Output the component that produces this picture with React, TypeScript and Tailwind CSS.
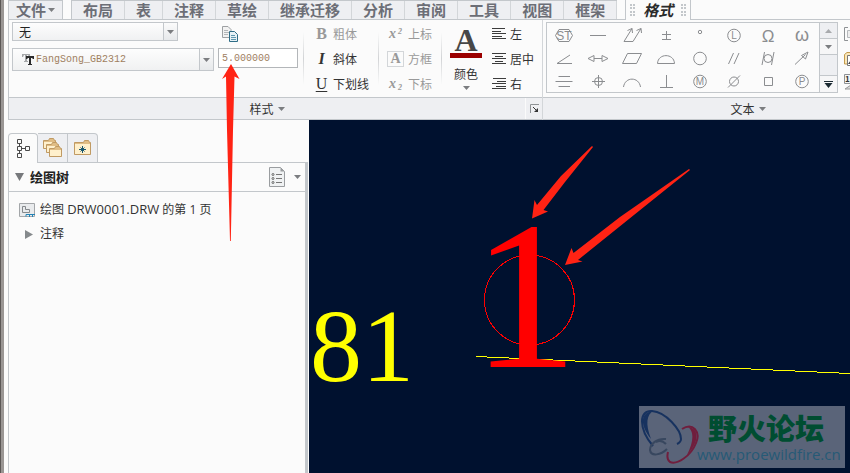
import { useState, type ReactNode } from 'react'

const tabs = ['布局', '表', '注释', '草绘', '继承迁移', '分析', '审阅', '工具', '视图', '框架']

interface SymbolDef {
  name: string
  art: ReactNode
}

const letter = (ch: string, size = 11, y = 14) => (
  <text x="12" y={y} fontSize={size} textAnchor="middle" fill="currentColor" stroke="none">{ch}</text>
)

// every symbol is drawn in a 24x20 box centred on 12,10
const symbols: SymbolDef[] = [
  { name: 'Statistical', art: <><path d="M7 4.500H17L20.500 10.500L17 16.500H7L3.500 10.500Z" />{letter('ST', 12, 15)}</> },
  { name: 'Straightness', art: <path d="M4 10.500H20" /> },
  { name: 'Total runout', art: <path d="M4 16.500L12 3.500M13 16.500L21 3.500M4 16.500H13M7.500 5.500L12 3.500L12.500 8M16.500 5.500L21 3.500L21.500 8" /> },
  { name: 'Plus minus', art: <path d="M12.500 6V14M8 9.500H17M8 14.500H17" /> },
  { name: 'Degree', art: <circle cx="12" cy="7" r="1.700" /> },
  { name: 'Least material', art: <><circle cx="12" cy="10.500" r="6.300" />{letter('L', 10)}</> },
  { name: 'Ohm', art: letter('Ω', 17, 17) },
  { name: 'Omega', art: letter('ω', 18, 16) },
  { name: 'Angularity', art: <path d="M18 7L5 15.500H20" /> },
  { name: 'Symmetric arrow', art: <path d="M8 10.500H16M2 10.500L8 7.500V13.500ZM22 10.500L16 7.500V13.500Z" /> },
  { name: 'Flatness', art: <path d="M7.500 5.500H21.500L16.500 15.500H2.500Z" /> },
  { name: 'Surface profile', art: <path d="M3.500 15.500C4 5 20 5 20.500 15.500Z" /> },
  { name: 'Circularity', art: <circle cx="12" cy="10.500" r="6.300" /> },
  { name: 'Parallelism', art: <path d="M6.500 16L11.500 5M12 16L17 5" /> },
  { name: 'Cylindricity', art: <><circle cx="12" cy="10.500" r="4" /><path d="M6 17L8.500 4M15.500 17L18 4" /></> },
  { name: 'Circular runout', art: <path d="M5 16.500L15.500 6.500M18 4L11.500 7.500L15.500 11Z" /> },
  { name: 'Symmetry', art: <path d="M6.500 5.500H18M3.500 10.500H20.500M6.500 15.500H18" /> },
  { name: 'Position', art: <><circle cx="12.500" cy="10.500" r="4" /><path d="M12.500 4V17M6 10.500H19" /></> },
  { name: 'Line profile', art: <path d="M3.500 16C5 5.500 19 5.500 20.500 16" /> },
  { name: 'Perpendicularity', art: <path d="M12.500 4V16.500M6 16.500H19" /> },
  { name: 'Maximum material', art: <><circle cx="12" cy="10.500" r="6.300" />{letter('M', 10)}</> },
  { name: 'Diameter', art: <><circle cx="12" cy="10.500" r="4.500" /><path d="M6 16.500L18 4.500" /></> },
  { name: 'Square', art: <path d="M8.500 6.500H16.500V14.500H8.500Z" /> },
  { name: 'Projected tolerance', art: <><circle cx="12" cy="10.500" r="6.300" />{letter('P', 10)}</> },
]

function Caret({ className = '' }: { className?: string }) {
  return (
    <svg viewBox="0 0 7 4" className={`h-1 w-[7px] shrink-0 fill-[#7b7d80] ${className}`} aria-hidden="true">
      <path d="M0 0H7L3.500 4Z" />
    </svg>
  )
}

function TextTypeIcon() {
  return (
    <svg viewBox="0 0 13 13" className="h-[13px] w-[13px]" aria-hidden="true">
      <path d="M0 1H8V4H7L6 2H5V8H6V9H2V8H3V2H2L1 4H0Z" fill="#a5a7a9" />
      <path d="M4 3H12V6H11L10 5H9V11H10V12H6V11H7V5H6L5 6H4Z" fill="#2b2b2b" />
    </svg>
  )
}

function CopyIcon() {
  return (
    <svg viewBox="0 0 17 17" className="h-[17px] w-[17px]" fill="none" aria-hidden="true">
      <path d="M0.500 0.500H6L9 3.500V11.500H0.500Z" fill="#f2f2f2" stroke="#9da0a3" />
      <path d="M2 4.500H6M2 6.500H7M2 8.500H6" stroke="#b3b6b8" />
      <path d="M7.500 5.500H12.500L15.500 8.500V15.500H7.500Z" fill="#e7f1f6" stroke="#2f6d87" />
      <path d="M9 9.500H13M9 11.500H14M9 13.500H14" stroke="#5f97ae" />
    </svg>
  )
}

const alignRowY = [0.5, 3.5, 5.5, 8.5, 10.5]

function AlignIcon({ rows }: { rows: [number, number][] }) {
  return (
    <svg viewBox="0 0 14 12" className="h-3 w-[14px]" stroke="#3c3c3c" aria-hidden="true">
      {rows.map(([from, to], i) => (
        <path key={i} d={`M${from} ${alignRowY[i]}H${to}`} />
      ))}
    </svg>
  )
}

function ToolButton({ icon, label, disabled }: { icon: ReactNode; label: string; disabled?: boolean }) {
  return (
    <button type="button" disabled={disabled} className="flex h-[25px] items-center gap-1 whitespace-nowrap text-[#333] disabled:text-[#999]">
      {icon}
      <span>{label}</span>
    </button>
  )
}

function Divider() {
  return <div className="my-3 w-px shrink-0 bg-linear-to-b from-[#fbfbfb] via-[#d2d4d6] to-[#fbfbfb]" />
}

function DropArrow() {
  return (
    <span className="pointer-events-none absolute inset-y-0 right-0 flex w-[15px] items-center justify-center border border-[#c3c7cb] bg-linear-to-b from-[#fbfbfb] to-[#e7e9eb]">
      <Caret />
    </span>
  )
}

function Ribbon() {
  const [style, setStyle] = useState('无')
  const [height, setHeight] = useState('5.000000')

  return (
    <header className="flex flex-col">
      <nav className="flex h-5 whitespace-nowrap text-[15px] leading-[18px] font-bold text-[#6c6e76]">
        <button type="button" className="flex w-[55px] items-center justify-center gap-0.5 border border-[#c3c7cb] bg-[#eeeff2]">
          文件<Caret />
        </button>
        <div className="w-2 border-b border-[#c3c7cb]" />
        <div className="flex border-t border-b border-l border-[#c3c7cb] bg-[#eeeff2]">
          {tabs.map((tab) => (
            <button key={tab} type="button" className="border-r border-[#d3d6d9] px-[11px]">{tab}</button>
          ))}
        </div>
        <div className="w-2 border-b border-[#c3c7cb]" />
        <button type="button" className="flex items-center gap-2 border-x border-[#c3c7cb] px-1 text-[#2b2b2b]">
          <span className="h-3 w-[5px] border-x-2 border-dotted border-[#c3c7cb]" />
          <span className="italic">格式</span>
          <span className="h-3 w-[5px] border-x-2 border-dotted border-[#c3c7cb]" />
        </button>
        <div className="flex-1 border-b border-[#c3c7cb]" />
      </nav>

      <div className="flex border-l border-[#c3c7cb]">
        <section className="flex shrink-0 flex-col border-r border-[#d3d6d9]">
          <div className="flex h-[77px]">
            <div className="flex w-[294px] flex-col gap-[5px] pt-0.5 pl-[3px]">
              <div className="flex items-start gap-11">
                <div className="relative h-[19px] w-[166px]">
                  <select
                    aria-label="文本样式"
                    value={style}
                    onChange={(e) => setStyle(e.target.value)}
                    className="h-full w-full appearance-none border border-[#c3c7cb] bg-linear-to-b from-[#fdfdfd] to-[#f0f1f2] pl-1.5 text-[#222]"
                  >
                    <option>无</option>
                  </select>
                  <DropArrow />
                </div>
                <button type="button" aria-label="复制样式" className="pt-1"><CopyIcon /></button>
              </div>
              <div className="flex items-start gap-1">
                <div className="relative flex h-[23px] w-[202px] items-center">
                  <select
                    aria-label="字体"
                    className="h-full w-full appearance-none border border-[#c3c7cb] bg-linear-to-b from-[#fdfdfd] to-[#f0f1f2] pl-[23px] font-['Liberation_Mono',monospace] text-[10px] text-[#a0805f]"
                  >
                    <option>FangSong_GB2312</option>
                  </select>
                  <span className="pointer-events-none absolute left-[10px]"><TextTypeIcon /></span>
                  <DropArrow />
                </div>
                <input
                  aria-label="文本高度"
                  value={height}
                  onChange={(e) => setHeight(e.target.value)}
                  className="h-5 w-20 border border-[#b3b6b9] bg-white px-[3px] font-['Liberation_Mono',monospace] text-[10px] text-[#a0805f]"
                />
              </div>
            </div>
            <Divider />
            <div className="flex w-[74px] flex-col pt-px pl-[10px]">
              <ToolButton disabled label="粗体" icon={<b className="w-[15px] text-center font-['Liberation_Serif',serif] text-base">B</b>} />
              <ToolButton label="斜体" icon={<b className="w-[15px] text-center font-['Liberation_Serif',serif] text-base italic">I</b>} />
              <ToolButton label="下划线" icon={<span className="w-[15px] text-center font-['Liberation_Serif',serif] text-base underline underline-offset-2">U</span>} />
            </div>
            <Divider />
            <div className="flex w-[62px] flex-col pt-px pl-2">
              <ToolButton disabled label="上标" icon={<b className="w-[17px] text-center font-['Liberation_Serif',serif] text-sm italic">x<sup className="ml-0.5 text-[8px]">2</sup></b>} />
              <ToolButton disabled label="方框" icon={<b className="h-4 w-[17px] border border-[#d3d6d9] text-center font-['Liberation_Serif',serif] text-sm leading-[14px]">A</b>} />
              <ToolButton disabled label="下标" icon={<b className="w-[17px] text-center font-['Liberation_Serif',serif] text-sm italic">x<sub className="ml-0.5 text-[8px]">2</sub></b>} />
            </div>
            <Divider />
            <button type="button" className="mr-1 flex w-[46px] flex-col items-center pt-2 pl-0.5 text-[#333]">
              <span className="font-['Liberation_Serif',serif] text-[32px] leading-[25px] font-bold text-[#474747]">A</span>
              <span className="h-[5px] w-8 bg-[#9b0000]" />
              <span className="mt-2 leading-4">颜色</span>
              <Caret className="mt-1" />
            </button>
            <div className="flex w-[50px] flex-col pt-px">
              <ToolButton label="左" icon={<AlignIcon rows={[[0, 13], [0, 9], [0, 14], [0, 10], [0, 14]]} />} />
              <ToolButton label="居中" icon={<AlignIcon rows={[[0, 14], [3, 11], [0, 14], [3, 11], [0, 14]]} />} />
              <ToolButton label="右" icon={<AlignIcon rows={[[1, 14], [5, 14], [0, 14], [4, 14], [0, 14]]} />} />
            </div>
          </div>
          <footer className="flex h-[23px] border-y border-[#c3c7cb] bg-[#eeeff2]">
            <button type="button" className="flex flex-1 items-center justify-center gap-1 text-[#333]">样式<Caret /></button>
            <button type="button" aria-label="样式设置" className="flex w-[17px] items-center justify-center border-l border-[#fbfbfb]">
              <svg viewBox="0 0 9 9" className="h-[9px] w-[9px]" fill="none" aria-hidden="true">
                <path d="M0.500 9V0.500H9" stroke="#8f9295" />
                <path d="M3 3L7 7" stroke="#333" />
                <path d="M8 4V8H4Z" fill="#333" />
              </svg>
            </button>
          </footer>
        </section>

        <section className="flex min-w-[410px] flex-1 flex-col">
          <div className="flex h-[77px] gap-[6px] pt-0.5 pl-[3px]">
            <div className="flex h-[71px] border border-[#c3c7cb]">
              <div className="grid grid-cols-8">
                {symbols.map((s) => (
                  <button key={s.name} type="button" aria-label={s.name} className="flex h-[23px] w-[34px] items-center justify-center text-[#8b8d90]">
                    <svg viewBox="0 0 24 20" className="h-5 w-6 font-['Liberation_Sans',sans-serif]" fill="none" stroke="currentColor" aria-hidden="true">
                      {s.art}
                    </svg>
                  </button>
                ))}
              </div>
              <div className="flex w-[18px] flex-col border-l border-[#c3c7cb] bg-[#eeeff2]">
                <button type="button" aria-label="上一行" className="flex h-4 items-center justify-center border-b border-[#c3c7cb]"><Caret className="rotate-180 opacity-60" /></button>
                <button type="button" aria-label="下一行" className="flex h-4 items-center justify-center border-b border-[#c3c7cb] bg-[#f6f6f7]"><Caret /></button>
                <span className="flex-1" />
                <button type="button" aria-label="更多符号" className="flex h-[17px] items-center justify-center border-t border-[#c3c7cb] bg-[#f6f6f7]">
                  <svg viewBox="0 0 9 7" className="h-[7px] w-[9px]" fill="#1d2b33" aria-hidden="true">
                    <path d="M0 0H9V1H0ZM0.500 2H8.500L4.500 7Z" />
                  </svg>
                </button>
              </div>
            </div>
            <div className="flex flex-col gap-2 pt-1">
              <svg viewBox="0 0 16 16" className="h-4 w-4" fill="none" aria-hidden="true">
                <path d="M4 1.500H0.500V14.500H4" stroke="#8f9295" />
                <path d="M3.500 4.500H14.500V11.500H3.500Z" fill="#eee" stroke="#b6b9bc" />
              </svg>
              <svg viewBox="0 0 16 16" className="h-4 w-4" fill="none" aria-hidden="true">
                <path d="M3 2.500H14.500V14H0.500V4.500Z" fill="#fbe7b8" stroke="#c39a4c" />
                <path d="M3.500 5.500H14.500V15.500H3.500Z" fill="#fff" stroke="#777" />
                <path d="M4 14L7 10L10 14Z" fill="#444" />
              </svg>
              <svg viewBox="0 0 16 16" className="h-4 w-4" aria-hidden="true">
                <path d="M0.500 0.500H15.500V9.500H0.500Z" fill="#f5f5f5" stroke="#8f9295" />
                <text x="1" y="8" fontSize="8" fontWeight="bold" fill="#333">15</text>
                <path d="M1 15L7 11V15Z" fill="#ddd" stroke="#999" />
              </svg>
            </div>
          </div>
          <footer className="flex h-[23px] items-center justify-center border-y border-[#c3c7cb] bg-[#eeeff2]">
            <button type="button" className="flex items-center gap-1 text-[#333]">文本<Caret /></button>
          </footer>
        </section>
      </div>
    </header>
  )
}

function Folder({ x, y, w, h }: { x: number; y: number; w: number; h: number }) {
  return (
    <g transform={`translate(${x} ${y})`}>
      <path d={`M0.500 ${h - 0.5}V2.500H${w - 7.5}L${w - 6.5} 0.500H${w - 2.5}L${w - 1.5} 2.500H${w - 0.5}V${h - 0.5}Z`} fill="#e0bd85" stroke="#c09a63" />
      <path d={`M1 4H${w - 1}V${h - 1}H1Z`} fill="#fff0cc" />
    </g>
  )
}

function TreePanel() {
  return (
    <aside className="flex w-[301px] shrink-0 flex-col pt-[13px] pr-px">
      <div className="flex h-[30px]">
        <button type="button" aria-label="模型树" className="flex w-[30px] items-center justify-center rounded-t-sm border border-b-0 border-[#c3c7cb]">
          <svg viewBox="0 0 14 19" className="h-[19px] w-[14px]" fill="none" stroke="#4a4a4a" aria-hidden="true">
            <path d="M1.500 0.500H5.500V4.500H1.500ZM1.500 7.500H5.500V11.500H1.500ZM1.500 14.500H5.500V18.500H1.500ZM9.500 7.500H13.500V11.500H9.500ZM3.500 4.500V7.500M3.500 11.500V14.500M5.500 9.500H9.500" />
          </svg>
        </button>
        <button type="button" aria-label="文件夹浏览器" className="flex w-[30px] items-center justify-center border-t border-r border-b border-[#c3c7cb] bg-[#eeeff2]">
          <svg viewBox="0 0 20 20" className="h-5 w-5" aria-hidden="true">
            <Folder x={0} y={0} w={13} h={11} />
            <Folder x={3} y={4} w={13} h={11} />
            <Folder x={6} y={8} w={13} h={11} />
          </svg>
        </button>
        <button type="button" aria-label="收藏夹" className="flex w-[30px] items-center justify-center rounded-tr-sm border-t border-r border-b border-[#c3c7cb] bg-[#eeeff2]">
          <svg viewBox="0 0 18 16" className="h-4 w-[18px]" aria-hidden="true">
            <Folder x={0} y={0} w={17} h={15} />
            <path d="M8.500 6V13M5 9.500H12M6.500 7.500L10.500 11.500M10.500 7.500L6.500 11.500" stroke="#17566e" />
          </svg>
        </button>
        <div className="flex-1 border-b border-[#c3c7cb]" />
      </div>
      <div className="flex-1 border-r-3 border-l border-[#c3c7cb]">
        <div className="flex h-[29px] items-center border-b border-[#c3c7cb] pl-1.5 text-[#222]">
          <button type="button" className="flex items-center gap-1.5 text-[13px] font-bold">
            <svg viewBox="0 0 9 8" className="h-2 w-[9px] fill-[#77797c]" aria-hidden="true"><path d="M0 0H9L4.500 8Z" /></svg>
            绘图树
          </button>
          <button type="button" aria-label="树设置" className="ml-auto flex items-center gap-2 pr-1">
            <svg viewBox="0 0 17 20" className="h-5 w-[17px]" fill="none" aria-hidden="true">
              <path d="M0.500 0.500H11.500L15.500 4.500V19.500H0.500Z" fill="#f0f2f3" stroke="#9a9da0" />
              <path d="M11.500 0.500V4.500H15.500Z" fill="#9a9da0" />
              <path d="M7 7.500H13M7 11.500H13M7 15.500H13" stroke="#777" />
              <g stroke="#666"><circle cx="4" cy="7.500" r="1" /><circle cx="4" cy="11.500" r="1" /><circle cx="4" cy="15.500" r="1" /></g>
            </svg>
            <Caret />
          </button>
        </div>
        <ul className="pt-1.5 pl-[10px] font-['Open_Sans','Noto_Sans_CJK_SC',sans-serif] text-[12px] text-[#333]">
          <li className="flex h-6 items-center gap-[5px]">
            <svg viewBox="0 0 16 14" className="h-[14px] w-4" fill="none" aria-hidden="true">
              <path d="M0.500 0.500H15.500V13.500H0.500Z" fill="#e9ebed" stroke="#a3a6a9" />
              <path d="M3.500 3.500H6.500V6.500H10.500V9.500H3.500Z" stroke="#85898c" />
              <path d="M7 13.500V11.500H16M10.500 11V14M13.500 11V14" stroke="#2583b5" />
            </svg>
            <span>绘图 <span className="text-[13px]">DRW0001.DRW</span> 的第 1 页</span>
          </li>
          <li className="flex h-6 items-center gap-[7px] pl-1.5">
            <svg viewBox="0 0 8 9" className="h-[9px] w-2 fill-[#85898c]" aria-hidden="true"><path d="M0 0L8 4.500L0 9Z" /></svg>
            注释
          </li>
        </ul>
      </div>
    </aside>
  )
}

function DrawingCanvas() {
  return (
    <main className="relative min-w-0 flex-1 overflow-hidden bg-[#00112f]">
      <svg viewBox="0 0 541 353" className="h-[353px] w-[541px] font-['Liberation_Serif',serif]" role="img" aria-label="DRW0001">
        <path d="M167 236.500L541 253.500" stroke="#ffff00" shapeRendering="crispEdges" />
        <circle cx="220.500" cy="180" r="45" fill="none" stroke="#ff0000" shapeRendering="crispEdges" />
        <text x="1" y="261" fontSize="104" fill="#ffff00">81</text>
        <text x="163" y="247" fontSize="212" fill="#ff0000">1</text>
      </svg>
      <div className="absolute right-[5px] bottom-[5px] flex h-[62px] w-[206px] bg-[#5a6479]">
        <svg viewBox="0 0 60 62" className="h-[62px] w-[60px] shrink-0" fill="none" aria-hidden="true">
          <path d="M14 40C-1 22 0 4 13 5C27 6 42 24 42 33C42 36 40 37 38 38" stroke="#17325f" strokeWidth="2" />
          <path d="M12 33C0 18 2 6 14 5C8 9 6 17 12 33Z" fill="#17325f" />
          <path d="M43 23C54 16 62 26 57 37C52 50 38 59 31 56C28 54 28 50 29 46" stroke="#701e3d" strokeWidth="2" />
          <path d="M49 21C60 22 61 35 48 49C55 35 55 25 49 21Z" fill="#701e3d" />
          <path d="M27 33C18 32 11 38 11 44C12 51 22 49 28 43M17 36C21 34 25 36 27 38" stroke="#38475f" strokeWidth="2" />
        </svg>
        <div className="flex flex-col">
          <span className="pt-1 pl-[9px] text-[29px] leading-[34px] font-black text-[#004d31]">野火论坛</span>
          <a href="#" className="-ml-0.5 font-['Open_Sans',sans-serif] text-[15px] leading-5 text-[#265a76]">www.proewildfire.cn</a>
        </div>
      </div>
    </main>
  )
}

// callouts lie over both the ribbon and the drawing
function Arrows() {
  return (
    <svg viewBox="0 0 850 473" className="pointer-events-none absolute top-0 left-0 h-[473px] w-[850px]" fill="#ff2314" aria-hidden="true">
      <path d="M231 64L239.500 79L234.500 76.500L233 130L230.800 241H230L227 130L226 76.500L222 79Z" />
      <path d="M532 218.500L534.500 200L537 205L561 176L592 146L593 147L565 182L543.500 210L548 211.500Z" />
      <path d="M565 265L571.500 248L573.500 253L620 217L689 169L690 170L624 223L578 260L582.500 261.500Z" />
    </svg>
  )
}

export default function App() {
  return (
    <div className="relative flex min-h-screen overflow-hidden bg-[#fbfbfb] font-['Noto_Sans_CJK_SC',sans-serif] text-[12px]">
      <div className="mr-1 w-1 shrink-0 border-l border-[#5c5856] bg-[#9a9694]" />
      <div className="flex min-w-0 flex-1 flex-col">
        <Ribbon />
        <div className="flex flex-1">
          <TreePanel />
          <DrawingCanvas />
        </div>
      </div>
      <Arrows />
    </div>
  )
}
